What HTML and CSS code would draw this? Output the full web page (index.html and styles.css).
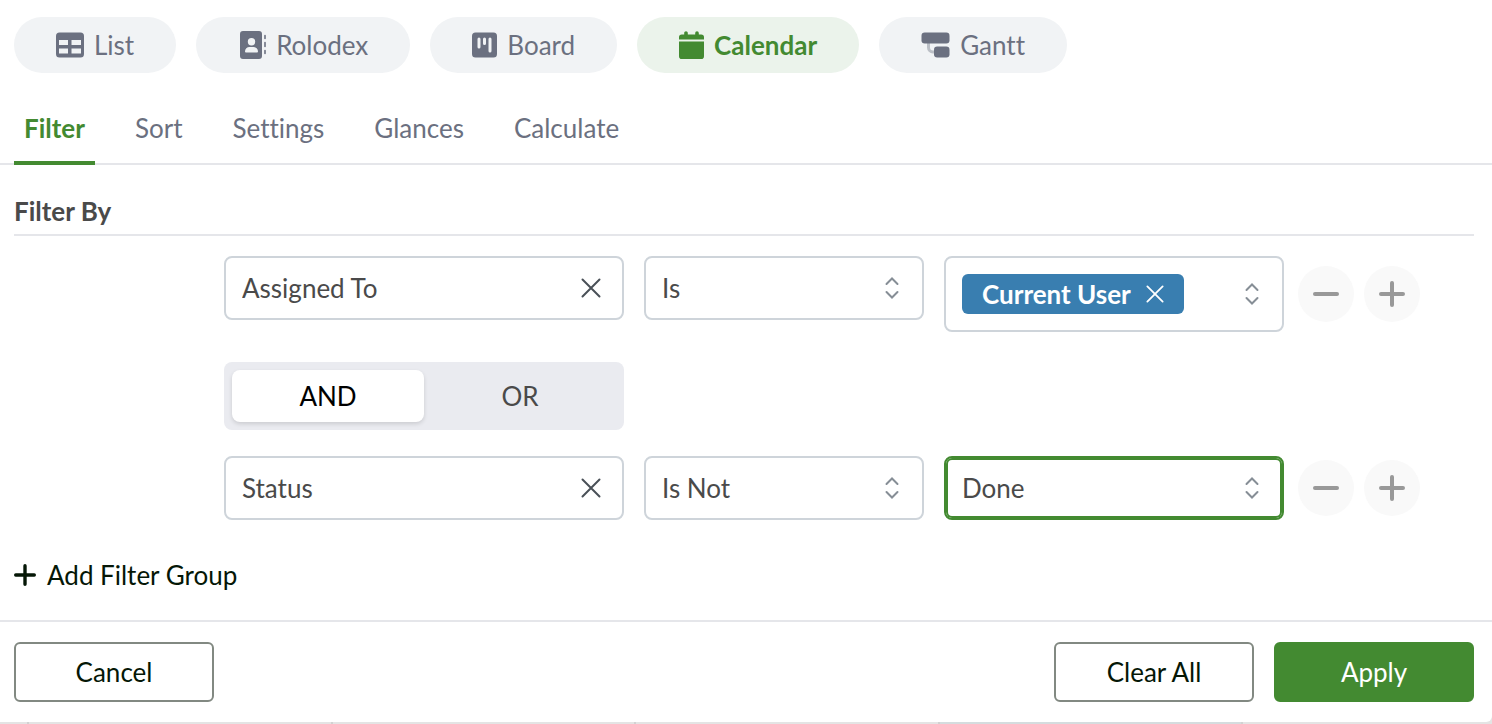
FILE: index.html
```html
<!DOCTYPE html>
<html lang="en">
<head>
<meta charset="utf-8">
<meta name="viewport" content="width=device-width, initial-scale=1">
<title>Calendar view filters</title>
<link rel="stylesheet" href="styles.css">
</head>
<body>
<svg class="sprite" aria-hidden="true">
  <symbol id="cross" viewBox="0 0 20 20"><path d="M1.5 1.5l17 17M18.5 1.5l-17 17" fill="none" stroke="currentColor" stroke-width="2" stroke-linecap="round"/></symbol>
  <symbol id="updown" viewBox="0 0 14 22"><path d="M1.5 7L7 1.500l5.500 5.500M1.500 15l5.500 5.500 5.500-5.500" fill="none" stroke="currentColor" stroke-width="2" stroke-linecap="round"/></symbol>
  <symbol id="minus" viewBox="0 0 26 26"><path d="M2 13h22" fill="none" stroke="currentColor" stroke-width="4" stroke-linecap="round"/></symbol>
  <symbol id="plus" viewBox="0 0 26 26"><path d="M2 13h22M13 2v22" fill="none" stroke="currentColor" stroke-width="4" stroke-linecap="round"/></symbol>
</svg>

<main class="panel">
  <nav class="views" aria-label="Views">
    <button class="view" type="button">
      <svg class="view-icon" width="28" height="28" viewBox="0 0 28 28" aria-hidden="true"><path fill="currentColor" fill-rule="evenodd" d="M3.500 1.500h21A3.500 3.500 0 0 1 28 5v18a3.500 3.500 0 0 1-3.500 3.500h-21A3.500 3.500 0 0 1 0 23V5a3.500 3.500 0 0 1 3.500-3.500zM3 9v5h9V9zM15.500 9v5h9.500V9zM3 17.500v5h9v-5zM15.500 17.500v5h9.500v-5z"/></svg>
      List
    </button>
    <button class="view" type="button">
      <svg class="view-icon" width="28" height="30" viewBox="0 0 28 30" aria-hidden="true"><path fill="currentColor" fill-rule="evenodd" d="M5 1h16a3 3 0 0 1 3 3v22a3 3 0 0 1-3 3H5a3 3 0 0 1-3-3V4a3 3 0 0 1 3-3zM13.500 8a3.700 3.700 0 1 0 0 7.400 3.700 3.700 0 0 0 0-7.400zM11.500 17A4.500 4.500 0 0 0 7 21.500c0 .6.400.900.900.900h11.200c.5 0 .9-.300.900-.900a4.500 4.500 0 0 0-4.500-4.500z"/><path d="M27 5.500v3M27 12.500v4M27 20.500v3" fill="none" stroke="currentColor" stroke-width="1.600" stroke-linecap="round"/></svg>
      Rolodex
    </button>
    <button class="view" type="button">
      <svg class="view-icon" width="25" height="28" viewBox="0 0 25 28" aria-hidden="true"><path fill="currentColor" fill-rule="evenodd" d="M3.500 1.500h18A3.500 3.500 0 0 1 25 5v18a3.500 3.500 0 0 1-3.500 3.500h-18A3.500 3.500 0 0 1 0 23V5a3.500 3.500 0 0 1 3.500-3.500zM7 6.500A1.500 1.500 0 0 0 5.500 8v8a1.500 1.500 0 0 0 3 0V8A1.500 1.500 0 0 0 7 6.500zM12.500 6.500A1.500 1.500 0 0 0 11 8v4.500a1.500 1.500 0 0 0 3 0V8a1.500 1.500 0 0 0-1.500-1.500zM18 6.500A1.500 1.500 0 0 0 16.500 8v12a1.500 1.500 0 0 0 3 0V8A1.500 1.500 0 0 0 18 6.500z"/></svg>
      Board
    </button>
    <button class="view view-active" type="button" aria-pressed="true">
      <svg class="view-icon" width="25" height="30" viewBox="0 0 25 30" aria-hidden="true"><path fill="currentColor" d="M7 1.200c1 0 1.800.8 1.800 1.800v1.500h7.400V3a1.800 1.800 0 0 1 3.600 0v1.500h2.400A2.800 2.800 0 0 1 25 7.300V9.500H0V7.300a2.800 2.800 0 0 1 2.800-2.800h2.400V3c0-1 .8-1.800 1.800-1.800zM0 11.500h25v14.700a2.800 2.800 0 0 1-2.800 2.800H2.800A2.800 2.800 0 0 1 0 26.200z"/></svg>
      Calendar
    </button>
    <button class="view" type="button">
      <svg class="view-icon" width="29" height="28" viewBox="0 0 29 28" aria-hidden="true"><path d="M7.500 12v4.500a4.500 4.500 0 0 0 4.500 4.500h2" fill="none" stroke="currentColor" stroke-width="3" opacity=".4"/><rect x=".5" y="1.500" width="28" height="11" rx="3.200" fill="currentColor"/><rect x="13" y="15.500" width="15.500" height="11" rx="3.200" fill="currentColor"/></svg>
      Gantt
    </button>
  </nav>

  <div class="tabs" role="tablist">
    <button class="tab tab-active" type="button" role="tab" aria-selected="true">Filter</button>
    <button class="tab" type="button" role="tab" aria-selected="false">Sort</button>
    <button class="tab" type="button" role="tab" aria-selected="false">Settings</button>
    <button class="tab" type="button" role="tab" aria-selected="false">Glances</button>
    <button class="tab" type="button" role="tab" aria-selected="false">Calculate</button>
  </div>

  <form class="filters">
    <h2 class="heading">Filter By</h2>

    <div class="group">
      <div class="rule">
        <div class="fields">
          <div class="control">
            <input class="value" type="text" value="Assigned To" aria-label="Field">
            <button class="clear" type="button" aria-label="Clear field"><svg class="cross"><use href="#cross"/></svg></button>
          </div>
          <div class="control">
            <select class="value" aria-label="Condition"><option>Is</option><option>Is Not</option></select>
            <svg class="updown" aria-hidden="true"><use href="#updown"/></svg>
          </div>
          <div class="control control-tags">
            <span class="tag">Current User
              <button class="tag-remove" type="button" aria-label="Remove Current User"><svg class="cross-small"><use href="#cross"/></svg></button>
            </span>
            <svg class="updown" aria-hidden="true"><use href="#updown"/></svg>
          </div>
        </div>
        <div class="row-actions">
          <button class="round" type="button" aria-label="Remove filter"><svg class="sign"><use href="#minus"/></svg></button>
          <button class="round" type="button" aria-label="Add filter"><svg class="sign"><use href="#plus"/></svg></button>
        </div>
      </div>

      <div class="joiner">
        <div class="fields">
          <div class="toggle" role="radiogroup" aria-label="Combine filters">
            <label class="choice"><input class="choice-input" type="radio" name="join" checked>AND</label>
            <label class="choice"><input class="choice-input" type="radio" name="join">OR</label>
          </div>
        </div>
      </div>

      <div class="rule">
        <div class="fields">
          <div class="control">
            <input class="value" type="text" value="Status" aria-label="Field">
            <button class="clear" type="button" aria-label="Clear field"><svg class="cross"><use href="#cross"/></svg></button>
          </div>
          <div class="control">
            <select class="value" aria-label="Condition"><option>Is Not</option><option>Is</option></select>
            <svg class="updown" aria-hidden="true"><use href="#updown"/></svg>
          </div>
          <div class="control control-focus">
            <select class="value" aria-label="Value"><option>Done</option></select>
            <svg class="updown" aria-hidden="true"><use href="#updown"/></svg>
          </div>
        </div>
        <div class="row-actions">
          <button class="round" type="button" aria-label="Remove filter"><svg class="sign"><use href="#minus"/></svg></button>
          <button class="round" type="button" aria-label="Add filter"><svg class="sign"><use href="#plus"/></svg></button>
        </div>
      </div>
    </div>

    <button class="add-group" type="button"><svg class="add-sign"><use href="#plus"/></svg>Add Filter Group</button>
  </form>

  <footer class="footer">
    <button class="button" type="button">Cancel</button>
    <div class="footer-end">
      <button class="button" type="button">Clear All</button>
      <button class="button button-primary" type="button">Apply</button>
    </div>
  </footer>
</main>

<div class="days" aria-hidden="true">
  <span class="day"></span><span class="day"></span><span class="day"></span><span class="day"></span><span class="day day-today"></span><span class="day"></span>
</div>
</body>
</html>
```
FILE: styles.css
```css
* { box-sizing: border-box; }

body {
  margin: 0;
  background: #e4e4e4;
  color: #4a4a4a;
  font: 400 26px/32px Lato, "Open Sans", sans-serif;
  font-variant-ligatures: none;
}

button, input, select {
  font: inherit;
  font-variant-ligatures: none;
  color: inherit;
}

button {
  padding: 0;
  border: 0;
  background: none;
  cursor: pointer;
}

svg { display: block; flex: none; }

.sprite { position: absolute; width: 0; height: 0; }

.panel {
  background: #fff;
  border-bottom-right-radius: 6px;
}

/* View switcher */
.views { display: flex; gap: 20px; padding: 17px 14px 20px; }

.view {
  display: flex;
  align-items: center;
  gap: 10px;
  height: 56px;
  padding: 0 42px;
  border-radius: 28px;
  background: #f1f3f5;
  color: #6b7080;
}

.view-active { background: #ebf3eb; color: #438a31; font-weight: 700; }

/* Tabs */
.tabs {
  display: flex;
  gap: 30px;
  padding: 0 14px;
  box-shadow: inset 0 -2px #e5e6ea;
}

.tab {
  height: 72px;
  padding: 2px 10px 0;
  border-bottom: 4px solid transparent;
  color: #6b7080;
}

.tab-active { border-color: #438a31; color: #438a31; font-weight: 700; }

/* Filter form */
.filters { padding: 30px 18px 29px 14px; }

.heading {
  margin: 0 0 20px;
  padding-bottom: 7px;
  border-bottom: 2px solid #e5e6ea;
  font-size: 26px;
  font-weight: 700;
}

.group { padding: 0 54px 0 210px; }

.rule { display: flex; align-items: center; gap: 14px; }

.fields {
  display: grid;
  flex: 1;
  grid-template-columns: 400fr 280fr 340fr;
  align-items: start;
  gap: 20px;
}

.control {
  display: grid;
  grid-template-columns: minmax(0, 1fr) auto;
  align-items: center;
  height: 64px;
  border: 2px solid #ced4da;
  border-radius: 8px;
  background: #fff;
}

.control-focus { border-color: #438a31; box-shadow: inset 0 0 0 2px #438a31; }

.control-tags { height: 76px; padding-left: 16px; }

.value {
  grid-area: 1 / 1 / 2 / 3;
  width: 100%;
  height: 100%;
  padding: 0 60px 0 16px;
  border: 0;
  outline: 0;
  background: none;
  appearance: none;
}

.clear, .updown { grid-area: 1 / 2 / 2 / 3; }
.clear { margin-right: 21px; color: #495057; }
.cross { width: 20px; height: 20px; }
.updown { width: 14px; height: 22px; margin-right: 23px; color: #868e96; pointer-events: none; }

.tag {
  display: flex;
  align-items: center;
  justify-self: start;
  gap: 15px;
  height: 40px;
  padding: 0 20px;
  border-radius: 6px;
  background: #397eb0;
  color: #fff;
  font-weight: 700;
}

.cross-small { width: 18px; height: 18px; }

.row-actions { display: flex; gap: 10px; }

.round {
  display: grid;
  place-items: center;
  width: 56px;
  height: 56px;
  border-radius: 50%;
  background: #f9f9f9;
  color: #999;
}

.sign { width: 26px; height: 26px; }

.joiner { display: flex; padding: 30px 136px 26px 0; }

.toggle {
  display: flex;
  padding: 8px;
  border-radius: 8px;
  background: #eaebf0;
}

.choice {
  flex: 1;
  height: 52px;
  border-radius: 8px;
  line-height: 52px;
  text-align: center;
}

.choice:has(:checked) {
  background: #fff;
  box-shadow: 0 2px 4px #0002;
  color: #000;
}

.choice-input { position: absolute; opacity: 0; pointer-events: none; }

.add-group {
  display: flex;
  align-items: center;
  gap: 11px;
  margin-top: 39px;
  color: #051706;
}

.add-sign { width: 22px; height: 22px; }

/* Footer */
.footer {
  display: flex;
  justify-content: space-between;
  padding: 20px 18px 20px 14px;
  border-top: 2px solid #e5e6ea;
}

.footer-end { display: flex; gap: 20px; }

.button {
  width: 200px;
  height: 60px;
  border: 2px solid #828982;
  border-radius: 6px;
  color: #051706;
}

.button-primary { border-color: #438a31; background: #438a31; color: #fff; }

/* Calendar grid showing below the panel */
.days {
  display: grid;
  grid-template-columns: 29px repeat(4, 304fr) 249fr;
  height: 2px;
}

.day { border-right: 2px solid #d2d2d2; }
.day:last-child { border: 0; }
.day-today { background: #d5dcde; }
```
